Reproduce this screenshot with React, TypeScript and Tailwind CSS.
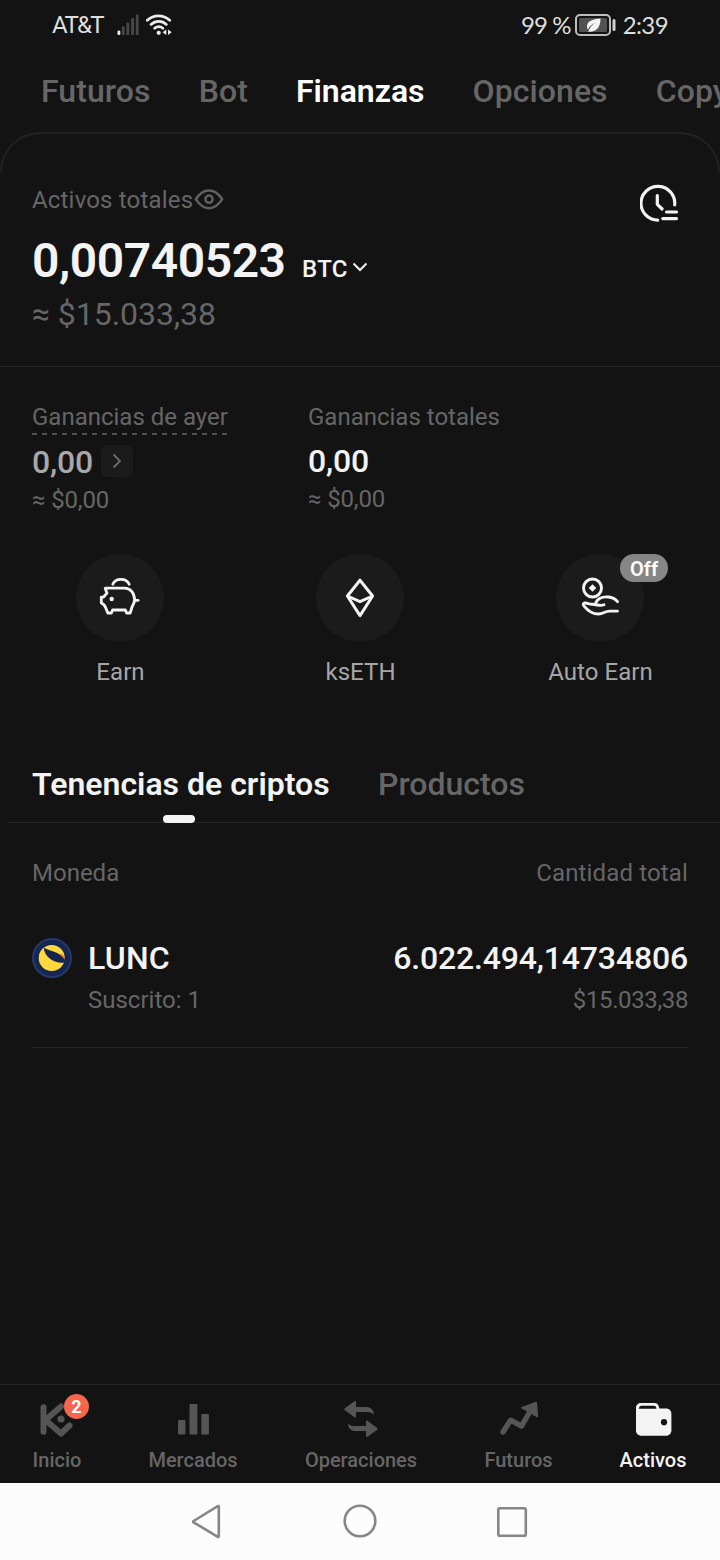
import type { ReactNode } from "react";

function SignalIcon() {
  return (
    <svg width="22" height="22" viewBox="0 0 22 22">
      <rect x="0.500" y="16.500" width="2.800" height="4.500" rx="1.200" fill="#f2f2f2" />
      <g fill="#484848">
        <rect x="4.800" y="12.500" width="2.800" height="8.500" rx="0.600" />
        <rect x="9.400" y="8.500" width="2.800" height="12.500" rx="0.600" />
        <rect x="14.200" y="4" width="2.800" height="17" rx="0.600" />
        <rect x="18.800" y="0.500" width="2.800" height="20.500" rx="0.600" />
      </g>
    </svg>
  );
}

function WifiIcon() {
  return (
    <svg width="27" height="22" viewBox="0 0 27 22" fill="none" stroke="#ececec" strokeLinecap="round">
      <path d="M1.300 6.200C7.700.3 17.200.3 23.700 6.200" strokeWidth="2.800" />
      <path d="M5 10.400c4.500-4 11-4 15.400 0" strokeWidth="2.700" />
      <path d="M8.600 14.300c2.600-2 5.900-2 8.300 0" strokeWidth="2.600" />
      <circle cx="12.700" cy="18.800" r="2.100" fill="#ececec" stroke="none" />
      <path d="M20.300 15.400v5.600l-3.700-2.800zM22 15.400v5.600l3.700-2.800z" fill="#ececec" stroke="none" />
    </svg>
  );
}

function BatteryIcon() {
  return (
    <svg width="42" height="22" viewBox="0 0 42 22">
      <rect x="1" y="1" width="34" height="20" rx="4" fill="none" stroke="#bdbdbd" strokeWidth="2" />
      <rect x="4" y="4" width="28" height="14" rx="1.500" fill="#525252" />
      <rect x="37.500" y="5" width="3" height="12" rx="1.500" fill="#cfcfcf" />
      <path d="M25.500 4.500C19 5 12.500 6.500 12 12c0 1.700.6 2.800 1 3.500 1.500-3.400 4.500-5.500 7.800-6.900-3.500 2.200-6.200 4.900-7.600 8.900 5.300 1.200 12.600-2 12.300-13z" fill="#f4f4f4" />
    </svg>
  );
}

function HistoryIcon() {
  return (
    <svg width="40" height="40" viewBox="0 0 40 40" fill="none" stroke="#f3f3f3" strokeWidth="3.200" strokeLinecap="round">
      <path d="M17.700 36.200A16.900 16.900 0 1 1 34.700 20.800" />
      <path d="M17.300 11.500v8.800l4.800 4.700" strokeLinejoin="round" />
      <path d="M26.500 28h10M22.800 34.600h13.700" />
    </svg>
  );
}

function EyeIcon() {
  return (
    <svg width="30" height="22" viewBox="0 0 30 22" fill="none" stroke="#606060" strokeWidth="2.500">
      <path d="M1.800 10.200C5 5.200 9.300 1.400 15 1.400S25 5.200 28.200 10.200C25 15.200 20.700 19.200 15 19.200S5 15.200 1.800 10.200z" strokeLinejoin="round" />
      <circle cx="15" cy="10.200" r="3.600" />
    </svg>
  );
}

function PigIcon() {
  return (
    <svg width="44" height="44" viewBox="0 0 44 44" fill="none" stroke="#f4f4f4" strokeWidth="2.800" strokeLinecap="round" strokeLinejoin="round">
      <path d="M14.800 8.200C17.500 1.800 28.400 1.800 31.200 8.200" />
      <path d="M7.200 12.200H26.500C32.500 12.200 36.300 17 36.600 23.500 36.600 27 35.200 29 34 31L32.200 37H28.600L27.400 34H14.600L13.400 37H9.800L7.800 32C7 29.500 6 28.200 3.300 27V21.200H5.700C6.500 19.400 8 18.200 9 17.200Z" />
      <path d="M37.200 24.300h2.900" />
      <circle cx="13.700" cy="23" r="2.200" fill="#f4f4f4" stroke="none" />
    </svg>
  );
}

function EthIcon() {
  return (
    <svg width="44" height="44" viewBox="0 0 44 44" fill="none" stroke="#f4f4f4" strokeWidth="3" strokeLinejoin="round">
      <path d="M22 4.200 34.600 20 22 39.600 9.400 20z" />
      <path d="M9.400 20 22 25.600l12.600-5.600" />
    </svg>
  );
}

function HandCoinIcon() {
  return (
    <svg width="44" height="44" viewBox="0 0 44 44" fill="none" stroke="#f4f4f4" strokeWidth="2.900" strokeLinecap="round" strokeLinejoin="round">
      <circle cx="14.500" cy="12" r="9" />
      <path d="M14.500 8.200 18.300 12l-3.800 3.800L10.700 12z" fill="#f4f4f4" stroke="none" />
      <path d="M17.900 26.500C20 22.500 25 20.500 30.500 21c4 .4 6.800 2 9 4.600" />
      <path d="M26 28.800C22 30.600 19.500 28.400 14 28.200c-2.800 0-4-.9-6.500-1.200-2.200-.3-2.800 1.300-1.600 2.800C10 35 15 38 20.500 38c4.700 0 6.500-2.900 11-2.900h8" />
    </svg>
  );
}

function LuncLogo() {
  return (
    <svg width="40" height="40" viewBox="0 0 40 40">
      <circle cx="20" cy="20" r="19" fill="#152650" stroke="#24386a" strokeWidth="2" />
      <circle cx="19.700" cy="20" r="13" fill="#ffd83d" />
      <path d="M11.800 9.600C14.500 11.800 22 13.500 26.500 15.800c3.500 1.900 6.200 3.500 6.700 5.700-.1 1.500-.5 2.300-.9 3-4.500 1-9.500-.3-13.300-2.900C14.500 18.500 12 14.500 11.800 9.600z" fill="#16264f" />
      <path d="M27 16c2-.2 4.200.4 5.200 2l.6 3.800c-1.600-2.100-3.400-4-5.800-5.800z" fill="#f0802f" />
    </svg>
  );
}

function KIcon() {
  return (
    <svg width="40" height="40" viewBox="0 0 40 40" fill="none" stroke="#555" strokeWidth="6" strokeLinecap="round" strokeLinejoin="round">
      <path d="M6.500 7.200v24.600M24 6.500 8.500 20 24 33.500 32.500 25.500" />
      <circle cx="24" cy="19" r="3.600" fill="#555" stroke="none" />
    </svg>
  );
}

function BarsIcon() {
  return (
    <svg width="40" height="40" viewBox="0 0 40 40" fill="#555">
      <rect x="5" y="20" width="7.400" height="14.500" rx="1.200" />
      <rect x="16.500" y="4" width="7.900" height="30.500" rx="1.200" />
      <rect x="28.300" y="14" width="7.600" height="20.500" rx="1.200" />
    </svg>
  );
}

function SwapIcon() {
  return (
    <svg width="40" height="40" viewBox="0 0 40 40" fill="#555">
      <path d="M3.800 8.300 13.500 1.300c.8-.5 1.500-.1 1.500.8V7h10.500c4.300 0 7.500 3.300 7.500 7.800-2-1.800-3.700-2.800-6.500-2.800H15v4.500c0 .9-.8 1.300-1.500.8L3.800 10.200c-.7-.5-.7-1.400 0-1.900z" />
      <path d="M36.200 27.900 26.500 20.800c-.7-.5-1.500-.1-1.500.8V26H13.500C10.700 26 9 25.200 7 23.400 7 27.900 10.200 31 14.500 31H25v5c0 .9.700 1.300 1.500.8l9.700-7c.7-.5.7-1.400 0-1.900z" />
    </svg>
  );
}

function TrendIcon() {
  return (
    <svg width="40" height="40" viewBox="0 0 40 40">
      <path d="M4 32 11.600 20.200 22.600 26 31.500 10.500" fill="none" stroke="#555" strokeWidth="5.400" strokeLinecap="round" strokeLinejoin="round" />
      <path d="M22.800 7 36.800 1.700c.7-.2 1.200.1 1.200.8l1.200 13.800c0 .9-.9 1.200-1.600.8L22.700 8.600c-.7-.4-.7-1.300.1-1.600z" fill="#555" />
    </svg>
  );
}

function WalletIcon() {
  return (
    <svg width="40" height="40" viewBox="0 0 40 40">
      <path d="M3 10V8C3 5 5 3 8 3h13.500c2.500 0 4.400 1.800 4.800 5.500H33c3.200 0 5.400 2.200 5.400 5.400v16.300c0 3.200-2.200 5.500-5.400 5.500H8.500C5.200 35.700 3 33.400 3 30.200z" fill="#f3f3f3" />
      <path d="M5.800 8.700c.3-1.900 1.200-2.900 2.700-2.900h12.500c1.400 0 2.200 1 2.500 2.900z" fill="#131313" />
      <circle cx="31" cy="22.200" r="3.100" fill="#131313" />
    </svg>
  );
}

const topTabs = [
  { label: "Futuros", active: false },
  { label: "Bot", active: false },
  { label: "Finanzas", active: true },
  { label: "Opciones", active: false },
  { label: "Copy", active: false },
];

function Shortcut({ icon, label, badge }: { icon: ReactNode; label: string; badge?: string }) {
  return (
    <div className="flex w-60 flex-col items-center">
      <div className="relative flex size-[88px] items-center justify-center rounded-full bg-[#1b1b1b]">
        {icon}
        {badge && (
          <span className="absolute top-0 left-16 flex h-7 w-12 items-center justify-center rounded-full bg-[#868686] pt-0.5 text-[20px] leading-6 font-semibold text-white">
            {badge}
          </span>
        )}
      </div>
      <span className="mt-3.5 pl-px text-[24px] leading-8 tracking-[0.05px] text-[#a6a6a6]">{label}</span>
    </div>
  );
}

const navItems = [
  { label: "Inicio", icon: <KIcon />, box: "w-12", badge: "2", active: false },
  { label: "Mercados", icon: <BarsIcon />, box: "w-[89px]", active: false },
  { label: "Operaciones", icon: <SwapIcon />, box: "w-28", active: false },
  { label: "Futuros", icon: <TrendIcon />, box: "w-[68px]", active: false },
  { label: "Activos", icon: <WalletIcon />, box: "w-[66px]", active: true },
];

export default function App() {
  return (
    <div className="flex h-[1560px] w-[720px] flex-col overflow-hidden bg-[#131313] font-[Roboto,sans-serif] text-[#666]">
      <header className="flex h-[50px] items-center justify-between px-[52px] font-[Lato,sans-serif] text-[24px] text-[#dedede]">
        <div className="flex items-center">
          <span className="w-[65px] font-[Roboto,sans-serif] tracking-[-1.7px]">AT&amp;T</span>
          <SignalIcon />
          <span className="ml-[7px]"><WifiIcon /></span>
        </div>
        <div className="flex items-center">
          <span className="mr-1 tracking-[-0.9px]">99 %</span>
          <BatteryIcon />
          <span className="ml-1.5 tracking-[-0.6px]">2:39</span>
        </div>
      </header>

      <nav className="flex h-[82px] items-center gap-12 pl-[41px] text-[32px] font-medium tracking-[0.08px] whitespace-nowrap">
        {topTabs.map((t) => (
          <span key={t.label} className={t.active ? "font-semibold tracking-normal text-white" : ""}>{t.label}</span>
        ))}
      </nav>

      <div className="h-10 shrink-0 rounded-t-[40px] border-x-2 border-t-2 border-[#222]" />

      <section className="h-[195px] shrink-0 border-b border-[#272727] px-8 pt-3">
        <div className="flex h-8 items-start justify-between pr-2">
          <div className="flex items-center text-[24px] leading-8">
            <span className="w-[162px] tracking-[0.18px] whitespace-nowrap">Activos totales</span>
            <EyeIcon />
          </div>
          <HistoryIcon />
        </div>
        <div className="mt-[17px] flex h-14 items-baseline text-[#f3f3f3]">
          <span className="w-[270px] text-[48px] leading-14 font-semibold tracking-[-0.45px]">0,00740523</span>
          <span className="text-[24px] font-medium tracking-[0.3px]">BTC</span>
          <svg className="ml-1" width="16" height="16" viewBox="0 0 16 16" fill="none" stroke="#f3f3f3" strokeWidth="2">
            <path d="m1.500 2.500 6.500 6.500L14.500 2.500" />
          </svg>
        </div>
        <div className="mt-[5px] text-[32px] leading-10 tracking-[-0.05px]">≈ $15.033,38</div>
      </section>

      <section className="flex h-[187px] shrink-0 pt-[34px] pl-8">
        <div className="w-[276px]">
          <div className="flex w-[196px] flex-col text-[24px] leading-8">
            <span className="whitespace-nowrap">Ganancias de ayer</span>
            <svg width="196" height="2">
              <path d="M0 1H196" stroke="#666" strokeWidth="1.400" strokeDasharray="5 5" />
            </svg>
          </div>
          <div className="mt-2.5 flex h-8 items-center text-[32px] leading-8 font-medium text-[#a8a8a8]">
            <span className="w-[69px] pt-px tracking-[-0.2px]">0,00</span>
            <span className="flex size-8 items-center justify-center rounded-md bg-[#1b1b1b]">
              <svg width="10" height="16" viewBox="0 0 10 16" fill="none" stroke="#6c6c6c" strokeWidth="1.800">
                <path d="m1.500 1.500 6.500 6.500L1.500 14.500" />
              </svg>
            </span>
          </div>
          <div className="mt-[7px] text-[24px] leading-8 tracking-[-0.15px]">≈ $0,00</div>
        </div>
        <div>
          <div className="text-[24px] leading-8">Ganancias totales</div>
          <div className="mt-3 text-[32px] leading-8 font-medium tracking-[-0.2px] text-[#f3f3f3]">0,00</div>
          <div className="mt-1.5 text-[24px] leading-8 tracking-[-0.15px]">≈ $0,00</div>
        </div>
      </section>

      <section className="flex h-[206px] shrink-0">
        <Shortcut icon={<PigIcon />} label="Earn" />
        <Shortcut icon={<EthIcon />} label="ksETH" />
        <Shortcut icon={<HandCoinIcon />} label="Auto Earn" badge="Off" />
      </section>

      <div className="ml-2 flex h-[63px] shrink-0 gap-12 border-b border-[#242424] pl-6 text-[32px] leading-12 font-medium">
        <div className="relative w-[298px] whitespace-nowrap text-[#f3f3f3]">
          <span className="font-semibold">Tenencias de criptos</span>
          <span className="absolute -bottom-px left-[131px] h-2 w-8 rounded-[4px] bg-[#f3f3f3]" />
        </div>
        <span>Productos</span>
      </div>

      <section className="flex grow flex-col px-8 pt-[34px]">
        <div className="flex justify-between text-[24px] leading-8">
          <span>Moneda</span>
          <span className="tracking-[0.15px]">Cantidad total</span>
        </div>
        <div className="mt-[45px] flex h-[114px] border-b border-[#242424]">
          <div className="pt-1"><LuncLogo /></div>
          <div className="ml-4 flex grow flex-col">
            <div className="flex justify-between text-[32px] leading-12 font-medium text-[#f3f3f3]">
              <span className="tracking-[0.2px]">LUNC</span>
              <span className="tracking-[-0.16px]">6.022.494,14734806</span>
            </div>
            <div className="mt-0.5 flex justify-between text-[24px] leading-8">
              <span>Suscrito: 1</span>
              <span className="tracking-[-0.38px]">$15.033,38</span>
            </div>
          </div>
        </div>
      </section>

      <nav className="flex h-[99px] shrink-0 justify-between border-t border-[#242424] pt-[15px] pr-[34px] pl-[33px]">
        {navItems.map((item) => (
          <div key={item.label} className={`flex flex-col items-center ${item.box}`}>
            <div className="relative mr-0.5 left-px">
              {item.icon}
              {item.badge && (
                <span className="absolute -top-1.5 left-[27px] flex size-[25px] items-center justify-center rounded-full bg-[#f5664f] text-[18px] leading-none font-bold text-white">
                  {item.badge}
                </span>
              )}
            </div>
            <span className={`mt-2 text-[20px] leading-6 font-medium whitespace-nowrap ${item.active ? "text-[#f3f3f3]" : ""}`}>
              {item.label}
            </span>
          </div>
        ))}
      </nav>

      <footer className="flex h-[77px] shrink-0 items-center justify-center gap-[116px] bg-[#fcfcfc]">
        <svg width="36" height="36" viewBox="0 0 36 36" fill="none" stroke="#868686" strokeWidth="2.600" strokeLinejoin="round">
          <path d="M28.800 2.600c0-.6-.5-.7-1-.4L3.600 17c-.6.400-.6.900 0 1.300l24.200 14.500c.5.300 1 .1 1-.5z" />
        </svg>
        <svg width="36" height="36" viewBox="0 0 36 36" fill="none" stroke="#868686" strokeWidth="2.600">
          <circle cx="18" cy="17" r="15.300" />
        </svg>
        <svg width="36" height="36" viewBox="0 0 36 36" fill="none" stroke="#868686" strokeWidth="2.600">
          <rect x="4.300" y="4.300" width="27.500" height="27.500" rx="1.500" />
        </svg>
      </footer>
    </div>
  );
}
